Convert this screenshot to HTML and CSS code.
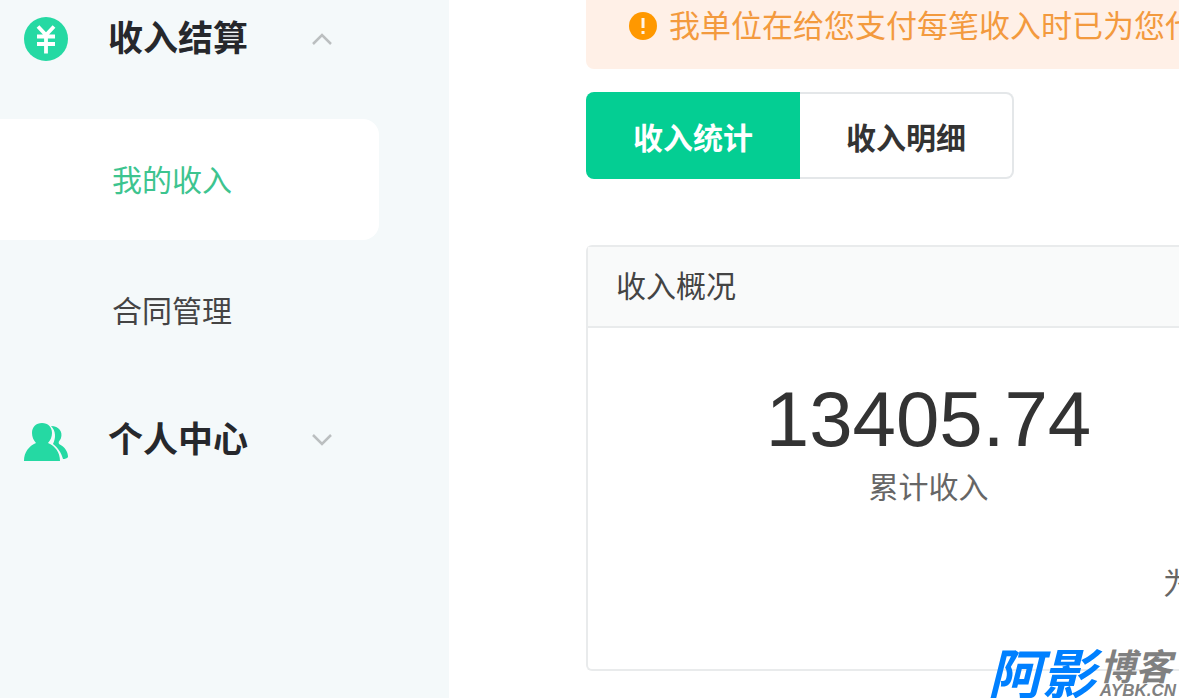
FILE: index.html
```
<!DOCTYPE html>
<html lang="zh-CN">
<head>
  <meta charset="UTF-8" />
  <meta name="viewport" content="width=device-width, initial-scale=1.0" />
  <title>我的收入</title>
  <link rel="stylesheet" href="styles.css">
</head>
<body>
  <div class="layout">
    <nav class="sidebar">
      <button class="menu-title" type="button">
        <svg class="menu-icon" viewBox="0 0 44 44">
          <circle cx="22" cy="22" r="22" fill="#25d9a3" />
          <path d="M14 9.500L22 18L30 9.500M13 19.500H31M13 27H31M22 18V36.500" fill="none" stroke="#fff" stroke-width="3.800" />
        </svg>
        <span class="menu-text">收入结算</span>
        <svg class="arrow" viewBox="0 0 22 14">
          <path d="M2 12L11 3L20 12" fill="none" stroke="#bbbfc0" stroke-width="2.500" />
        </svg>
      </button>
      <ul class="submenu">
        <li><a class="menu-item active" href="#">我的收入</a></li>
        <li><a class="menu-item" href="#">合同管理</a></li>
      </ul>
      <button class="menu-title" type="button">
        <svg class="menu-icon" viewBox="0 0 44 44">
          <path d="M27 8C35 8 39 14 37 20C36 23 34 23 35 26C41 29 44 34 44 39C43 40.500 41 41 39 41C37 34 34 30 29 26C32 20 32 13 27 8Z" fill="#25d9a3" />
          <path d="M18 5C24 5 28 9 28 15C28 19 26.500 22 24 25C31 28 36 34 36 43H0C0 34 5 28 12 25C9.500 22 8 19 8 15C8 9 12 5 18 5Z" fill="#25d9a3" />
        </svg>
        <span class="menu-text">个人中心</span>
        <svg class="arrow" viewBox="0 0 22 14">
          <path d="M2 2L11 11L20 2" fill="none" stroke="#bbbfc0" stroke-width="2.500" />
        </svg>
      </button>
    </nav>

    <main class="main">
      <div class="notice">
        <svg class="notice-icon" viewBox="0 0 28 28">
          <circle cx="14" cy="14" r="14" fill="#ff9800" />
          <path d="M14 6V16M14 19V22" stroke="#fff3e6" stroke-width="3" />
        </svg>
        <span class="notice-text">我单位在给您支付每笔收入时已为您代</span>
      </div>

      <div class="tabs">
        <button class="tab active" type="button">收入统计</button>
        <button class="tab" type="button">收入明细</button>
      </div>

      <section class="card">
        <h2 class="card-title">收入概况</h2>
        <div class="card-body">
          <div class="total">
            <div class="total-number">13405.74</div>
            <div class="total-label">累计收入</div>
          </div>
          <div class="remark">为</div>
        </div>
      </section>
    </main>
  </div>

  <div class="watermark">
    <span class="mark-blue">阿影</span>
    <div class="mark-side">
      <span class="mark-gray">博客</span>
      <span class="mark-url">AYBK.CN</span>
    </div>
  </div>
</body>
</html>
```
FILE: styles.css
```
* {
  box-sizing: border-box;
}
body {
  font-family: "Liberation Sans", "Noto Sans CJK SC", sans-serif;
  font-size: 30px;
  margin: 0;
  color: #333;
  background: #fff;
  overflow: hidden;
}
button {
  font-family: inherit;
  cursor: pointer;
}
.layout {
  display: flex;
  min-height: 100vh;
}
.sidebar {
  flex: none;
  width: 449px;
  padding-right: 70px;
  background: #f4f9fa;
}
.menu-title {
  display: flex;
  align-items: center;
  width: 100%;
  height: 78px;
  padding: 0 46px 0 24px;
  border: 0;
  background: none;
  color: #26282c;
  font-size: 35px;
  font-weight: bold;
}
.menu-icon {
  width: 44px;
  height: 44px;
  margin-right: 40px;
}
.menu-text {
  padding-bottom: 8px;
}
.arrow {
  width: 22px;
  height: 14px;
  margin-left: auto;
}
.submenu {
  display: grid;
  gap: 10px;
  margin: 0;
  padding: 41px 0 30px;
  list-style: none;
}
.menu-item {
  display: block;
  padding: 2px 0 0 112px;
  line-height: 119px;
  border-radius: 0 16px 16px 0;
  color: #444;
  text-decoration: none;
}
.menu-item.active {
  background: #fff;
  color: #3dc48f;
}
.main {
  flex: 1;
  min-width: 0;
  padding-left: 137px;
}
.notice {
  display: flex;
  align-items: center;
  gap: 12px;
  height: 69px;
  padding: 0 0 18px 43px;
  border-radius: 0 0 0 8px;
  background: #fff0e7;
  color: #f39a3e;
  font-size: 31px;
  white-space: nowrap;
  overflow: hidden;
}
.notice-icon {
  flex: none;
  width: 28px;
  height: 28px;
}
.notice-text {
  padding-bottom: 4px;
}
.tabs {
  display: flex;
  margin: 23px 0 66px;
}
.tab {
  width: 214px;
  height: 87px;
  border: 2px solid #e4e7e9;
  border-left: 0;
  border-radius: 0 8px 8px 0;
  background: #fff;
  color: #333;
  font-size: 30px;
  font-weight: bold;
}
.tab.active {
  border: 0;
  border-radius: 8px 0 0 8px;
  background: #04ce93;
  color: #fff;
}
.card {
  border: 2px solid #e9ebec;
  border-right: 0;
  border-radius: 6px 0 0 6px;
}
.card-title {
  margin: 0;
  padding-left: 28px;
  border-bottom: 2px solid #e9ebec;
  background: #f9fafa;
  color: #444;
  font-size: 30px;
  font-weight: normal;
  line-height: 79px;
}
.card-body {
  height: 341px;
  padding-top: 46px;
  overflow: hidden;
}
.total {
  padding-left: 90px;
  text-align: center;
}
.total-number {
  font-size: 78px;
  line-height: 90px;
}
.total-label {
  color: #666;
  line-height: 48px;
}
.remark {
  margin: 48px -14px 0 0;
  color: #666;
  line-height: 48px;
  text-align: right;
}
/* site mark laid over the bottom right corner */
.watermark {
  position: absolute;
  right: 3px;
  bottom: 0;
  display: flex;
  align-items: flex-end;
  gap: 4px;
  font-style: italic;
  font-weight: bold;
}
.mark-blue {
  color: #0080ff;
  font-size: 54px;
  line-height: 46px;
}
.mark-side {
  display: flex;
  flex-direction: column;
  color: #808080;
}
.mark-gray {
  font-size: 36px;
  line-height: 32px;
}
.mark-url {
  font-family: "Liberation Sans", sans-serif;
  font-size: 17px;
  line-height: 14px;
}
```
